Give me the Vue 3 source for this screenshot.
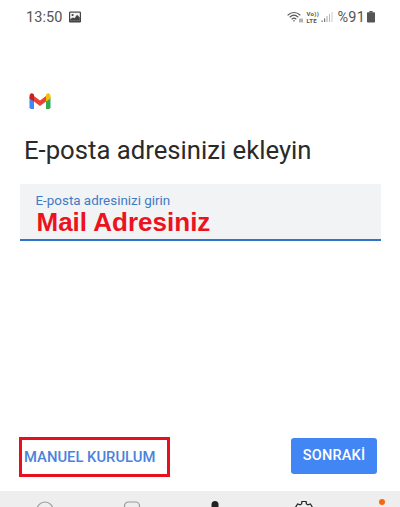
<script setup>
const title = 'E-posta adresinizi ekleyin'
</script>

<template>
  <div class="page">
    <div class="status">
      <div class="left">
        <span class="time">13:50</span>
        <svg class="pic" width="12" height="12" viewBox="0 0 12 12">
          <rect x="0" y="0.5" width="12" height="11" rx="1.2" fill="#444" />
          <rect x="1.2" y="1.7" width="9.6" height="8" fill="#f4f4f4" />
          <circle cx="3.6" cy="4" r="1.1" fill="#444" />
          <path d="M1.2 9.7 L1.2 8 L4 6.4 L5.6 7.2 L8 3.8 L10.8 6.4 L10.8 9.7 Z" fill="#444" />
        </svg>
      </div>
      <div class="right">
        <svg class="wifi" width="16" height="12" viewBox="0 0 16 12" fill="none" stroke="#555" stroke-width="1.1" stroke-linecap="round">
          <path d="M1 4 C4.5 0.6 9.5 0.6 13 4" />
          <path d="M3 6 C5.5 3.7 8.5 3.7 11 6" />
          <path d="M5 8 C6.2 6.9 7.8 6.9 9 8" />
          <circle cx="7" cy="9.8" r="0.8" fill="#555" stroke="none" />
          <path d="M13 8 V11 M15 8 V11" stroke-width="0.9" />
        </svg>
        <div class="volte"><span>Vo))</span><span>LTE</span></div>
        <svg class="signal" width="12" height="12" viewBox="0 0 12 12">
          <rect x="0.5" y="9.5" width="1.2" height="1.5" fill="#777" />
          <rect x="3" y="7.5" width="1.2" height="3.5" fill="#777" />
          <rect x="5.5" y="5" width="1" height="6" fill="#aaa" />
          <rect x="8" y="3" width="1" height="8" fill="#bbb" />
          <rect x="10.5" y="1" width="1" height="10" fill="#ccc" />
        </svg>
        <span class="pct">%91</span>
        <svg class="batt" width="8" height="12" viewBox="0 0 8 12">
          <rect x="2.4" y="0" width="3.2" height="1.4" fill="#555" />
          <rect x="0" y="1.2" width="8" height="10.3" rx="0.8" fill="#555" />
        </svg>
      </div>
    </div>

    <svg class="gmail" width="22" height="16" viewBox="0 0 22 16">
      <path d="M0.5 4 L0.5 14.3 Q0.5 16 2.2 16 L5 16 L5 5.5 Z" fill="#4285f4" />
      <path d="M17 5.5 L17 16 L19.8 16 Q21.5 16 21.5 14.3 L21.5 4 Z" fill="#34a853" />
      <path d="M5 3 L11 7.4 L17 3 L17 8.6 L11 13 L5 8.6 Z" fill="#ea4335" />
      <path d="M0.5 4 Q0.5 0 3.2 0.3 L5 1.6 L5 8.6 L0.5 5.4 Z" fill="#c5221f" />
      <path d="M17 1.6 L18.8 0.3 Q21.5 0 21.5 4 L21.5 5.4 L17 8.6 Z" fill="#fbbc04" />
    </svg>

    <h1 class="title">{{ title }}</h1>

    <div class="field">
      <div class="label">E-posta adresinizi girin</div>
      <div class="value">Mail Adresiniz</div>
    </div>

    <div class="actions">
      <div class="manual"><span>MANUEL KURULUM</span></div>
      <button class="next">SONRAKİ</button>
    </div>

    <div class="nav">
      <svg class="nav-a" width="18" height="6" viewBox="0 0 18 6"><circle cx="9" cy="9" r="8" fill="none" stroke="#999" stroke-width="1.2" /></svg>
      <svg class="nav-b" width="18" height="6" viewBox="0 0 18 6"><rect x="1.5" y="1" width="15" height="15" rx="4" fill="none" stroke="#999" stroke-width="1.2" /></svg>
      <svg class="nav-c" width="8" height="6" viewBox="0 0 8 6"><rect x="0.5" y="0" width="7" height="14" rx="3.5" fill="#222" /></svg>
      <svg class="nav-d" width="18" height="6" viewBox="2 2 20 6.67">
        <path d="M19.14,12.94c0.04-0.3,0.06-0.61,0.06-0.94c0-0.32-0.02-0.64-0.07-0.94l2.03-1.58c0.18-0.14,0.23-0.41,0.12-0.61l-1.92-3.32c-0.12-0.22-0.37-0.29-0.59-0.22l-2.39,0.96c-0.5-0.38-1.03-0.7-1.62-0.94L14.4,2.81c-0.04-0.24-0.24-0.41-0.48-0.41h-3.84c-0.24,0-0.43,0.17-0.47,0.41L9.25,5.35C8.66,5.59,8.12,5.92,7.63,6.29L5.24,5.33c-0.22-0.08-0.47,0-0.59,0.22L2.74,8.87C2.62,9.08,2.66,9.34,2.86,9.48l2.03,1.58C4.84,11.36,4.8,11.69,4.8,12" fill="none" stroke="#222" stroke-width="1.4" />
      </svg>
      <span class="dot"></span>
    </div>
  </div>
</template>

<style>
html, body { margin: 0; background: #fff; }
</style>

<style scoped>
.page {
  width: 400px;
  height: 507px;
  overflow: hidden;
  display: flex;
  flex-direction: column;
  background: #fff;
  font-family: Roboto, "Liberation Sans", sans-serif;
}
.status {
  height: 16px;
  padding: 9px 25px 0 26px;
  display: flex;
  justify-content: space-between;
  align-items: center;
  color: #555;
}
.left, .right { display: flex; align-items: center; }
.time { font-size: 14.5px; letter-spacing: 0.1px; }
.pic { margin-left: 6px; }
.wifi { margin-right: 3px; }
.volte {
  display: flex;
  flex-direction: column;
  font-size: 6px;
  line-height: 7px;
  font-weight: 700;
  letter-spacing: 0.3px;
  width: 12px;
  margin-right: 3px;
}
.pct { font-size: 14.5px; margin: 0 2px 0 4px; letter-spacing: 0.2px; }
.gmail { margin: 68px 0 0 28.5px; }
.title {
  margin: 25px 0 0 24px;
  font-size: 25.7px;
  line-height: 32px;
  font-weight: 400;
  color: #2a2a2a;
  white-space: nowrap;
}
.field {
  margin: 18px 19px 0 19.5px;
  padding: 9px 0 0 16px;
  background: #f1f3f4;
  border-bottom: 2.5px solid #2f74c8;
  box-sizing: border-box;
  height: 56.5px;
}
.label { font-size: 13.4px; line-height: 15px; color: #3f7bc4; }
.value {
  margin-top: 1px;
  font-family: "Liberation Sans", Arial, sans-serif;
  font-weight: 700;
  font-size: 26px;
  line-height: 26px;
  padding-left: 1px;
  color: #ec1320;
  white-space: nowrap;
}
.actions {
  margin-top: 196px;
  padding: 0 23px 0 19px;
  display: flex;
  justify-content: space-between;
  align-items: flex-start;
}
.manual {
  width: 151px;
  height: 40px;
  box-sizing: border-box;
  border: 3px solid #e8101e;
  padding-left: 2px;
  display: flex;
  align-items: center;
  font-size: 14.8px;
  font-weight: 500;
  color: #4a82dc;
  white-space: nowrap;
}
.next {
  width: 86px;
  height: 36px;
  margin-top: 1px;
  border: 0;
  border-radius: 3px;
  background: #4285f4;
  color: #fff;
  font-family: Roboto, "Liberation Sans", sans-serif;
  font-size: 14.5px;
  font-weight: 500;
  letter-spacing: 0.2px;
  padding: 0;
}
.nav {
  margin-top: 14px;
  flex: 1;
  background: #eeeeee;
  display: flex;
  align-items: flex-end;
  padding-left: 36px;
}
.nav-b { margin-left: 69px; }
.nav-c { margin-left: 70px; }
.nav-d { margin-left: 76px; }
.dot {
  width: 6px;
  height: 6px;
  border-radius: 50%;
  background: #f26a10;
  margin: 0 0 2px 66px;
}
</style>
